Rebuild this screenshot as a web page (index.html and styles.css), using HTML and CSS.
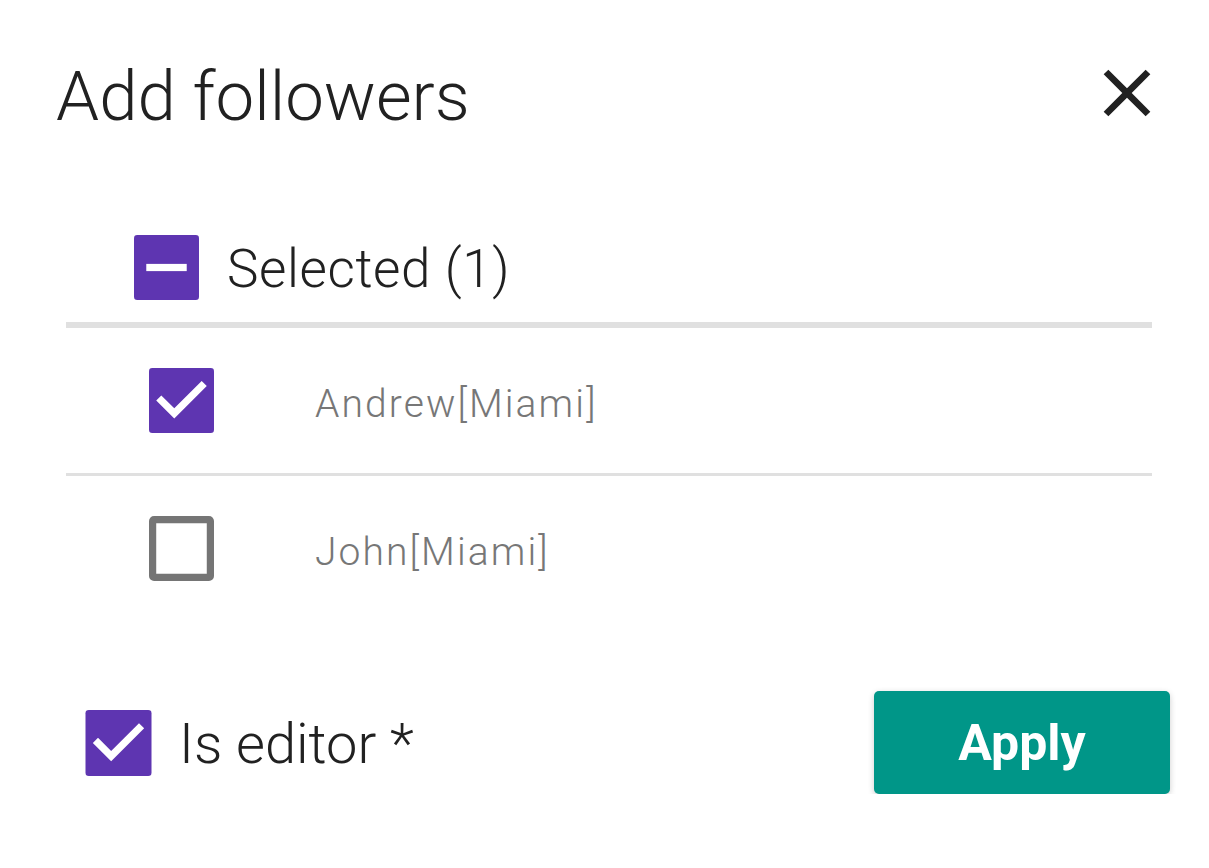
FILE: index.html
```html
<!DOCTYPE html>
<html lang="en">
<head>
	<meta charset="UTF-8" />
	<title>Add followers</title>
	<link rel="stylesheet" href="styles.css">
</head>
<body>
	<!-- 添加关注者 弹窗 开始 -->
	<div class="dialog">
		<div class="dialog-head">
			<h1 class="dialog-title">Add followers</h1>
			<button class="close-btn" type="button" aria-label="Close">
				<svg viewBox="0 0 24 24" width="80" height="80"><path d="M19 6.41L17.59 5 12 10.59 6.41 5 5 6.41 10.59 12 5 17.59 6.41 19 12 13.41 17.59 19 19 17.59 13.41 12z" fill="#212121"/></svg>
			</button>
		</div>

		<div class="list">
			<div class="list-head">
				<span class="cbox cbox-head">
					<svg viewBox="0 0 18 18"><rect width="18" height="18" rx="0.9" fill="#5e35b1"/><rect x="3.4" y="8" width="11.2" height="2" fill="#fff"/></svg>
				</span>
				<span class="list-head-text">Selected (1)</span>
			</div>
			<div class="list-row">
				<span class="cbox">
					<svg viewBox="0 0 18 18"><rect width="18" height="18" rx="0.9" fill="#5e35b1"/><path d="M7 14L2 9l1.41-1.41L7 11.17l7.59-7.59L16 5l-9 9z" fill="#fff"/></svg>
				</span>
				<span class="list-row-text">Andrew[Miami]</span>
			</div>
			<div class="list-row">
				<span class="cbox">
					<svg viewBox="0 0 18 18"><rect x="1" y="1" width="16" height="16" rx="0.4" fill="none" stroke="#757575" stroke-width="2"/></svg>
				</span>
				<span class="list-row-text">John[Miami]</span>
			</div>
		</div>

		<div class="dialog-foot">
			<label class="editor">
				<span class="cbox cbox-editor">
					<svg viewBox="0 0 18 18"><rect width="18" height="18" rx="0.9" fill="#5e35b1"/><path d="M7 14L2 9l1.41-1.41L7 11.17l7.59-7.59L16 5l-9 9z" fill="#fff"/></svg>
				</span>
				<span class="editor-text">Is editor *</span>
			</label>
			<button class="apply-btn" type="button">Apply</button>
		</div>
	</div>
	<!-- 添加关注者 弹窗 结束 -->
</body>
</html>
```

FILE: styles.css
```css
*{
	margin:0;
	padding:0;
	box-sizing:border-box;
}
body{
	background:#fff;
	font-family:Roboto,"Noto Sans",sans-serif;
	color:#212121;
}
.dialog{
	width:1209px;
	padding:57px 39px 0 56px;
}
/* 头部 */
.dialog-head{
	display:flex;
	justify-content:space-between;
	align-items:flex-start;
}
.dialog-title{
	font-size:69px;
	font-weight:300;
	line-height:80px;
}
.close-btn{
	display:block;
	margin:-4px 3px 0 0;
	border:0;
	background:none;
	cursor:pointer;
}
.close-btn svg{
	display:block;
}
/* 列表 */
.list{
	margin:75px 18px 0 10px;
}
.cbox{
	display:block;
	flex:none;
	width:65px;
	height:65px;
}
.cbox svg{
	display:block;
	width:100%;
	height:100%;
}
.list-head{
	display:flex;
	align-items:center;
	height:116px;
	padding:0 0 0 68px;
	border-bottom:6px solid #e0e0e0;
}
.list-head-text{
	margin-left:28px;
	padding-top:4px;
	font-size:53px;
	font-weight:300;
	line-height:62px;
	letter-spacing:0.6px;
}
.list-row{
	display:flex;
	align-items:center;
	height:148px;
	padding:0 0 0 83px;
	border-bottom:3px solid #e0e0e0;
}
.list-row:last-child{
	border-bottom-color:transparent;
}
.list-row-text{
	margin-left:101px;
	padding-top:7px;
	font-size:39px;
	font-weight:300;
	line-height:46px;
	letter-spacing:2.1px;
	color:#777;
}
/* 底部 */
.dialog-foot{
	display:flex;
	justify-content:space-between;
	align-items:center;
	margin-top:67px;
	padding-left:29px;
}
.editor{
	display:flex;
	align-items:center;
}
.cbox-editor{
	width:67px;
	height:66px;
}
.editor-text{
	margin-left:27px;
	padding-top:2px;
	font-size:56px;
	font-weight:300;
	line-height:64px;
}
.apply-btn{
	width:296px;
	height:103px;
	border:0;
	border-radius:5px;
	background:#009688;
	box-shadow:0 2px 6px rgba(0,0,0,0.2);
	font-family:Roboto,"Noto Sans",sans-serif;
	font-size:50px;
	font-weight:700;
	color:#fff;
	cursor:pointer;
}
```
